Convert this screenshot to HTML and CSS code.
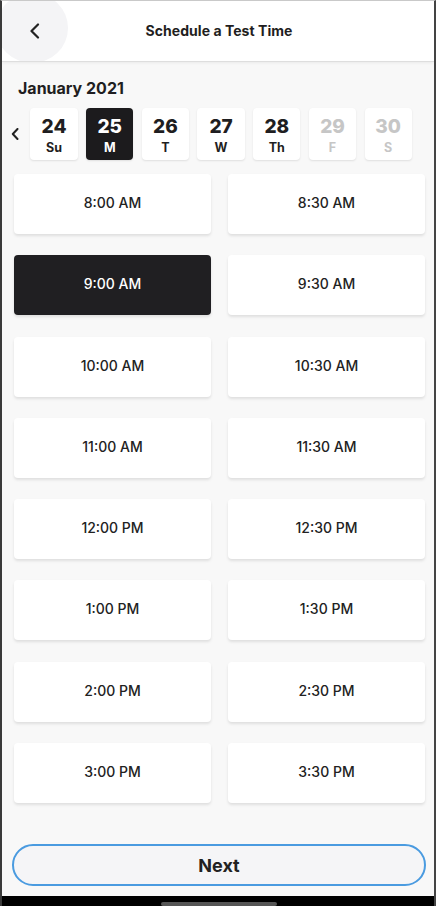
FILE: index.html
```html
<!DOCTYPE html>
<html lang="en">
<head>
  <meta charset="UTF-8" />
  <meta name="viewport" content="width=device-width, initial-scale=1" />
  <title>Schedule a Test Time</title>
  <link rel="stylesheet" href="styles.css">
</head>
<body>
  <div class="screen">
    <header class="topbar">
      <button class="back" aria-label="Back">
        <svg width="12" height="16" viewBox="0 0 12 16"><path d="M9 1.5 L2.5 8 L9 14.5" fill="none" stroke="#222" stroke-width="2.2" stroke-linecap="round" stroke-linejoin="round"/></svg>
      </button>
      <h1>Schedule a Test Time</h1>
    </header>

    <main class="content">
      <div class="month">January 2021</div>
      <div class="days">
        <button class="prev" aria-label="Previous week">
          <svg width="8" height="12" viewBox="0 0 8 12"><path d="M6.5 1 L1.8 6 L6.5 11" fill="none" stroke="#222" stroke-width="2" stroke-linecap="round" stroke-linejoin="round"/></svg>
        </button>
        <div class="day"><b>24</b><span>Su</span></div>
        <div class="day active"><b>25</b><span>M</span></div>
        <div class="day"><b>26</b><span>T</span></div>
        <div class="day"><b>27</b><span>W</span></div>
        <div class="day"><b>28</b><span>Th</span></div>
        <div class="day off"><b>29</b><span>F</span></div>
        <div class="day off"><b>30</b><span>S</span></div>
      </div>

      <div class="slots">
        <button class="slot">8:00 AM</button>
        <button class="slot">8:30 AM</button>
        <button class="slot active">9:00 AM</button>
        <button class="slot">9:30 AM</button>
        <button class="slot">10:00 AM</button>
        <button class="slot">10:30 AM</button>
        <button class="slot">11:00 AM</button>
        <button class="slot">11:30 AM</button>
        <button class="slot">12:00 PM</button>
        <button class="slot">12:30 PM</button>
        <button class="slot">1:00 PM</button>
        <button class="slot">1:30 PM</button>
        <button class="slot">2:00 PM</button>
        <button class="slot">2:30 PM</button>
        <button class="slot">3:00 PM</button>
        <button class="slot">3:30 PM</button>
      </div>
    </main>

    <div class="actions">
      <button class="next">Next</button>
    </div>

    <div class="homebar"><span></span></div>
  </div>
</body>
</html>
```

FILE: styles.css
```css
* {
  box-sizing: border-box;
}
body {
  margin: 0;
  background-color: #f8f8f8;
  font-family: "Inter", "Liberation Sans", sans-serif;
  color: #1f1e21;
}
button {
  font-family: inherit;
  color: inherit;
}
.screen {
  width: 436px;
  height: 906px;
  display: flex;
  flex-direction: column;
  border-top: 1px solid #c9c9c9;
  border-left: 2px solid #3a3a3a;
  border-right: 2px solid #444;
  overflow: hidden;
  position: relative;
}
.topbar {
  height: 60px;
  flex-shrink: 0;
  background-color: #fff;
  display: flex;
  align-items: center;
  justify-content: center;
  position: relative;
  box-shadow: 0 1px 0 #dedede, 0 2px 3px rgba(0, 0, 0, 0.06);
  overflow: hidden;
  z-index: 1;
}
.back {
  position: absolute;
  left: -6px;
  top: -8px;
  width: 72px;
  height: 70px;
  border-radius: 50%;
  border: none;
  background-color: #f4f4f6;
  padding: 0 0 0 6px;
  display: flex;
  align-items: center;
  justify-content: center;
}
.back svg {
  margin-top: 6px;
}
.topbar h1 {
  margin: 0 0 2px;
  font-size: 14px;
  font-weight: 700;
  letter-spacing: 0.05px;
  padding-left: 2px;
}
.content {
  flex: 1;
  padding: 17px 9px 0 12px;
}
.month {
  font-size: 16px;
  font-weight: 700;
  padding-left: 4px;
  height: 20px;
  line-height: 20px;
}
.days {
  display: flex;
  align-items: center;
  gap: 8.4px;
  margin-top: 10px;
}
.prev {
  width: 10px;
  height: 20px;
  border: none;
  background: none;
  padding: 0;
  margin-left: -4px;
  margin-right: 2px;
  display: flex;
  align-items: center;
  justify-content: center;
}
.day {
  width: 47.3px;
  height: 52px;
  background-color: #fff;
  border-radius: 4px;
  box-shadow: 0 1px 2px rgba(0, 0, 0, 0.1);
  display: flex;
  flex-direction: column;
  align-items: center;
  padding-top: 8px;
}
.day b {
  font-size: 19px;
  font-weight: 800;
  line-height: 22px;
}
.day span {
  font-size: 12.5px;
  font-weight: 700;
  line-height: 14px;
  margin-top: 3px;
}
.day.active {
  background-color: #1c1b1d;
  color: #fff;
}
.day.off {
  color: #c6c6c6;
}
.slots {
  display: grid;
  grid-template-columns: 197px 197px;
  column-gap: 17px;
  row-gap: 21.3px;
  margin-top: 14px;
}
.slot {
  height: 60px;
  border: none;
  border-radius: 4px;
  background-color: #fff;
  box-shadow: 0 2px 3px rgba(0, 0, 0, 0.1);
  font-size: 14px;
  font-weight: 500;
  color: #222;
  padding-bottom: 4px;
}
.slot.active {
  background-color: #201f22;
  color: #fff;
}
.actions {
  flex-shrink: 0;
  padding: 0 8px 10px 10px;
}
.next {
  width: 100%;
  height: 42px;
  border: 2px solid #4a9be0;
  border-radius: 21px;
  background-color: #f5f5f7;
  font-size: 18px;
  font-weight: 700;
  color: #222;
}
.homebar {
  height: 10px;
  flex-shrink: 0;
  margin: 0 -2px;
  background-color: #000;
  display: flex;
  justify-content: center;
  align-items: center;
}
.homebar span {
  width: 116px;
  height: 4px;
  border-radius: 2px;
  background-color: #555;
  margin-top: 6px;
  margin-left: 2px;
}
```
